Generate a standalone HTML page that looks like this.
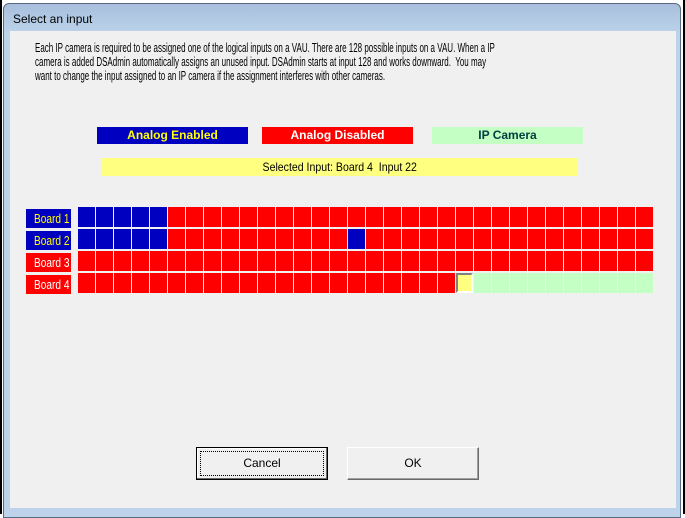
<!DOCTYPE html>
<html><head><style>
body{margin:0;width:685px;height:514px;background:#fff;position:relative;overflow:hidden;font-family:"Liberation Sans",Arial,sans-serif;}
.a{position:absolute;}
.frame{left:3px;top:3px;width:678px;height:515px;background:linear-gradient(#a7bfdc,#bcd3ea 30px,#bcd3ea);border:1px solid #5a6a80;border-radius:6px 6px 0 0;box-sizing:border-box;}
.client{left:10px;top:31px;width:666px;height:477px;background:#f0f0f0;}
.title{left:13px;top:12px;font-size:12px;color:#000;}
.txt{left:35px;top:41px;font-size:13px;line-height:14px;color:#000;white-space:nowrap;transform:scaleX(0.615);transform-origin:0 0;}
.leg{height:17px;font-size:12px;font-weight:bold;text-align:center;line-height:16px;}
.row{left:78px;width:576px;height:20px;background:repeating-linear-gradient(to right,#f00 0 17px,#f0f0f0 17px 18px);}
.blue{background:repeating-linear-gradient(to right,#0000c0 0 17px,#f0f0f0 17px 18px);height:20px;}
.green{background:repeating-linear-gradient(to right,#c4ffc4 0 17px,#f0f0f0 17px 18px);height:20px;}
.lbl{left:26px;width:45px;height:19px;font-size:13px;line-height:19px;overflow:hidden;white-space:nowrap;}
.lbl span{display:inline-block;margin-left:8px;transform:scaleX(0.78);transform-origin:0 0;}
.btn{top:447px;width:132px;height:33px;background:#f0f0f0;box-sizing:border-box;border:1px solid;border-color:#fff #6a6a6a #6a6a6a #fff;box-shadow:inset -1px -1px 0 #a0a0a0;font-size:12px;text-align:center;line-height:31px;}
</style></head><body>
<div class="a" style="left:0;top:0;width:2px;height:514px;background:#000;"></div>
<div class="a" style="left:683px;top:0;width:2px;height:514px;background:#000;"></div>
<div class="a frame"></div>
<div class="a title">Select an input</div>
<div class="a client"></div>
<div class="a txt">Each IP camera is required to be assigned one of the logical inputs on a VAU. There are 128 possible inputs on a VAU. When a IP<br>camera is added DSAdmin automatically assigns an unused input. DSAdmin starts at input 128 and works downward.&nbsp; You may<br>want to change the input assigned to an IP camera if the assignment interferes with other cameras.</div>

<div class="a leg" style="left:97px;top:127px;width:151px;background:#0000c0;color:#ff0;">Analog Enabled</div>
<div class="a leg" style="left:262px;top:127px;width:151px;background:#f00;color:#fff;">Analog Disabled</div>
<div class="a leg" style="left:432px;top:127px;width:151px;background:#c4ffc4;color:#004040;">IP Camera</div>
<div class="a" style="left:101px;top:158px;width:477px;height:18px;background:#ffff80;font-size:12px;text-align:center;line-height:18px;"><span style="display:inline-block;transform:scaleX(0.88);">Selected Input: Board 4&nbsp; Input 22</span></div>

<div class="a row" style="top:207px;"></div>
<div class="a blue" style="left:78px;top:207px;width:89px;"></div>
<div class="a row" style="top:229px;"></div>
<div class="a blue" style="left:78px;top:229px;width:89px;"></div>
<div class="a blue" style="left:348px;top:229px;width:17px;"></div>
<div class="a row" style="top:251px;"></div>
<div class="a row" style="top:273px;"></div>
<div class="a" style="left:456px;top:273px;width:17px;height:20px;background:#ffff80;box-sizing:border-box;border:2px solid;border-color:#808080 #fff #fff #808080;"></div>
<div class="a green" style="left:474px;top:273px;width:180px;"></div>

<div class="a lbl" style="top:209px;background:#0000c0;color:#ff0;"><span>Board 1</span></div>
<div class="a lbl" style="top:231px;background:#0000c0;color:#ff0;"><span>Board 2</span></div>
<div class="a lbl" style="top:253px;background:#f00;color:#fff;"><span>Board 3</span></div>
<div class="a lbl" style="top:275px;background:#f00;color:#fff;"><span>Board 4</span></div>

<div class="a btn" style="left:196px;border-color:#000;box-shadow:inset -1px -1px 0 #6a6a6a,inset 1px 1px 0 #fff;"><div style="position:absolute;left:3px;top:3px;right:3px;bottom:3px;border:1px dotted #000;line-height:23px;">Cancel</div></div>
<div class="a btn" style="left:347px;">OK</div>
</body></html>
